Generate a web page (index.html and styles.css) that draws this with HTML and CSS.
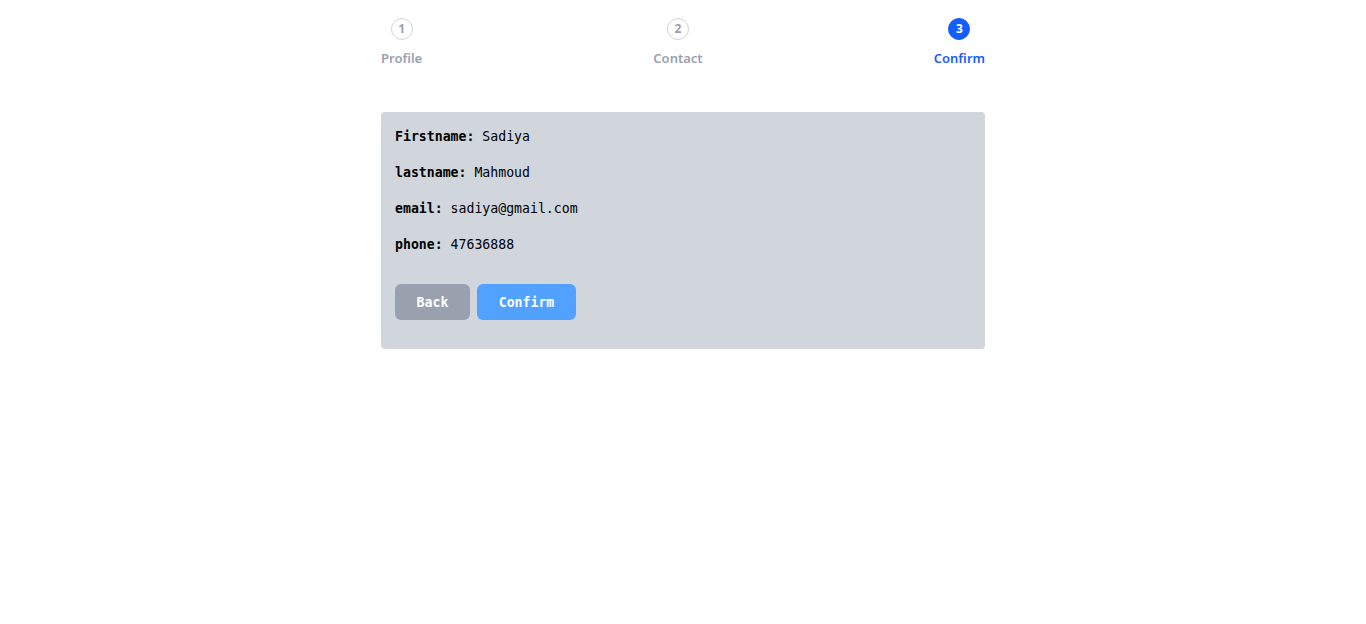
FILE: index.html
```html
<!DOCTYPE html>
<html lang="en">
<head>
<meta charset="utf-8">
<title>Confirm</title>
<link rel="stylesheet" href="styles.css">
</head>
<body>
<div class="wrap">
  <div class="steps">
    <div class="step">
      <span class="dot">1</span>
      <span class="label">Profile</span>
    </div>
    <div class="step">
      <span class="dot">2</span>
      <span class="label">Contact</span>
    </div>
    <div class="step active">
      <span class="dot">3</span>
      <span class="label">Confirm</span>
    </div>
  </div>
  <div class="card">
    <div class="rows">
      <p class="row"><b>Firstname:</b> Sadiya</p>
      <p class="row"><b>lastname:</b> Mahmoud</p>
      <p class="row"><b>email:</b> sadiya@gmail.com</p>
      <p class="row"><b>phone:</b> 47636888</p>
    </div>
    <div class="actions">
      <button class="btn btn-back">Back</button>
      <button class="btn btn-confirm">Confirm</button>
    </div>
  </div>
</div>
</body>
</html>
```
FILE: styles.css
```css
* { box-sizing: border-box; }
body {
  margin: 0;
  background: #fff;
  font-family: "Noto Sans", "Open Sans", sans-serif;
}
.wrap {
  width: 604px;
  margin: 0 auto;
  padding-top: 18px;
}
.steps {
  display: flex;
  justify-content: space-between;
}
.step {
  display: flex;
  flex-direction: column;
  align-items: center;
  gap: 10px;
}
.dot {
  width: 22px;
  height: 22px;
  border-radius: 50%;
  border: 1px solid #d1d5dc;
  color: #99a1af;
  font-size: 12px;
  font-weight: 700;
  display: flex;
  align-items: center;
  justify-content: center;
  line-height: 1;
}
.label {
  font-size: 13px;
  font-weight: 600;
  color: #99a1af;
  line-height: 16px;
}
.step.active .dot {
  background: #155dfc;
  border-color: #155dfc;
  color: #fff;
}
.step.active .label { color: #155dfc; }
.card {
  margin-top: 46px;
  background: #d1d5dc;
  border-radius: 4px;
  padding: 15px 14px 29px;
  font-family: "DejaVu Sans Mono", "Liberation Mono", monospace;
  font-size: 13.2px;
  color: #000;
}
.rows {
  display: flex;
  flex-direction: column;
  gap: 16px;
}
.row {
  margin: 0;
  line-height: 20px;
}
.actions {
  margin-top: 29px;
  display: flex;
  gap: 7px;
}
.btn {
  height: 36px;
  border: none;
  border-radius: 6px;
  color: #fff;
  font-family: "DejaVu Sans Mono", "Liberation Mono", monospace;
  font-size: 13.2px;
  font-weight: 700;
  cursor: pointer;
}
.btn-back { width: 75px; background: #99a1af; }
.btn-confirm { width: 99px; background: #51a2ff; }
```
